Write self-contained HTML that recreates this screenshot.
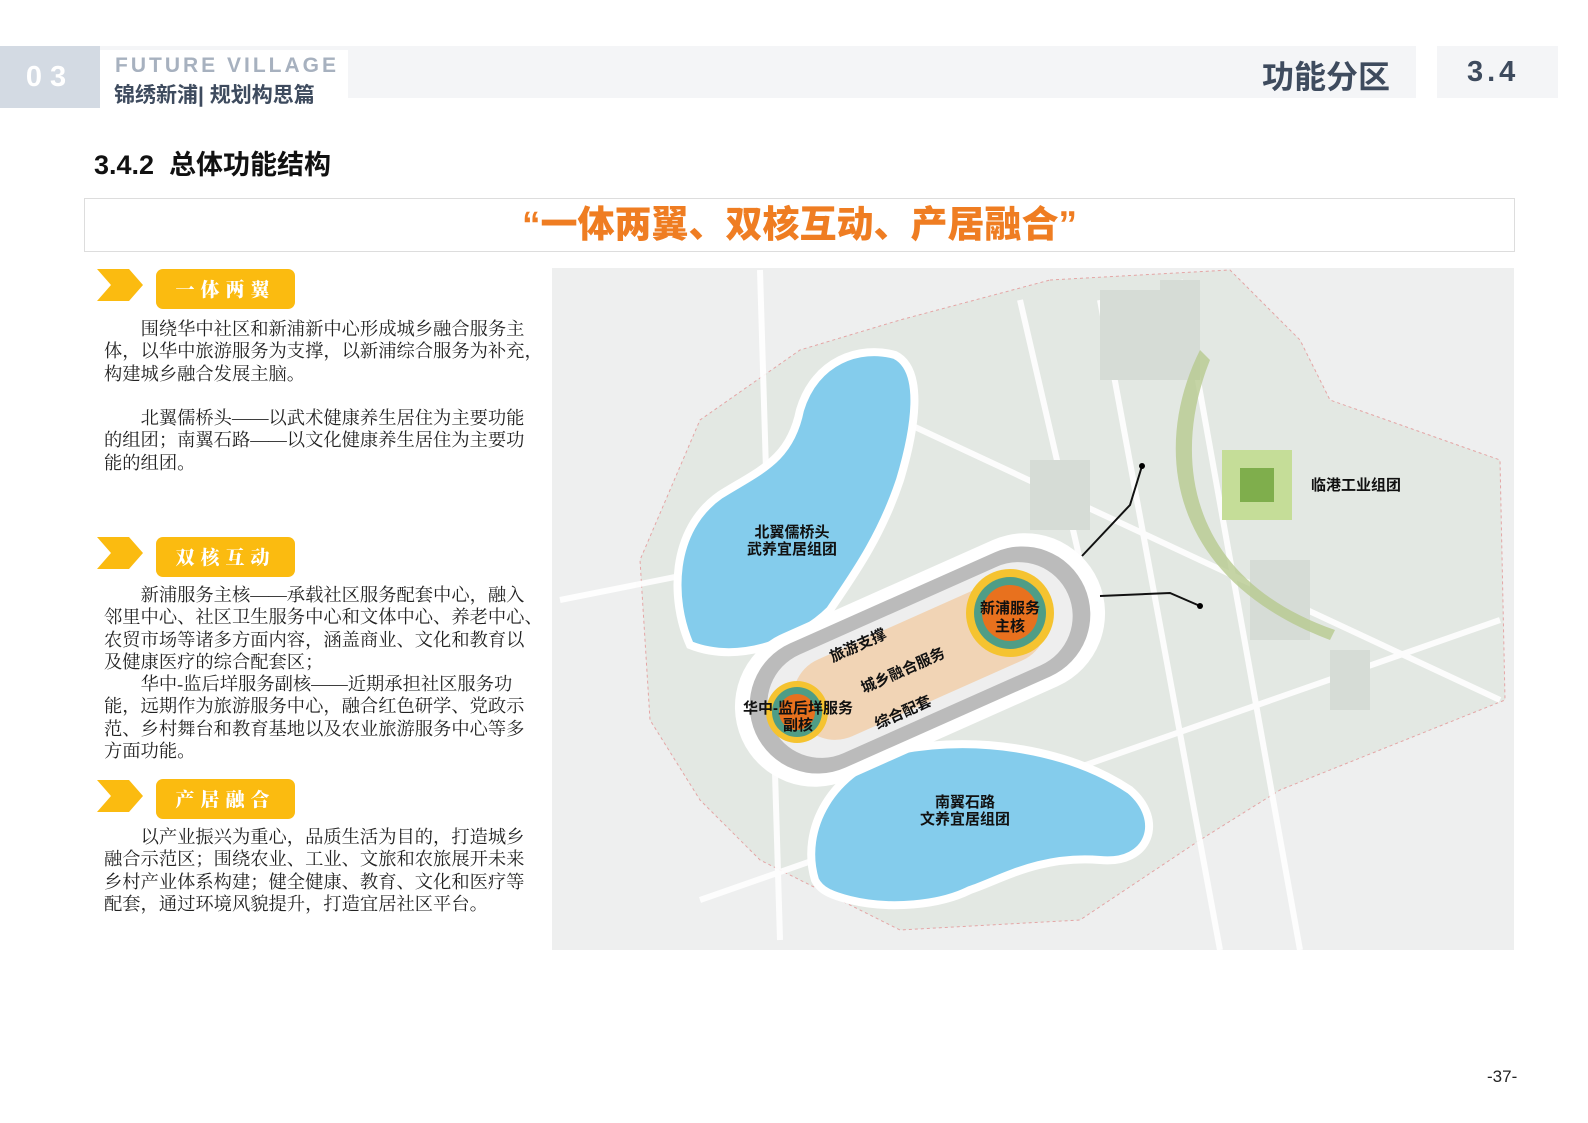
<!DOCTYPE html>
<html><head><meta charset="utf-8"><style>
*{margin:0;padding:0;box-sizing:border-box}
body{width:1588px;height:1123px;background:#fff;position:relative;overflow:hidden;font-family:"Liberation Sans","Noto Sans CJK SC",sans-serif}
.a{position:absolute}
.txt{position:absolute;left:104px;width:440px;font-family:"Liberation Serif","Noto Serif CJK SC",serif;font-size:18.3px;line-height:22.3px;color:#222;white-space:nowrap}
.tag{position:absolute;left:156px;width:139px;height:40px;background:#fbbb10;border-radius:7px;color:#fff;font-family:"Noto Serif CJK SC",serif;font-weight:900;font-size:19px;letter-spacing:6px;text-align:center;line-height:40px}
</style></head><body>
<div class="a" style="left:0;top:46px;width:1558px;height:52px;background:#f4f5f7"></div>
<div class="a" style="left:0;top:46px;width:100px;height:62px;background:#d3dae3;color:#fff;font-weight:bold;font-size:29px;letter-spacing:8px;line-height:62px;text-align:center">03</div>
<div class="a" style="left:100px;top:50px;width:248px;height:58px;background:#fff"></div>
<div class="a" style="left:115px;top:54px;font-weight:bold;font-size:21px;letter-spacing:3px;color:#a7b1bf">FUTURE VILLAGE</div>
<div class="a" style="left:114px;top:79px;font-weight:bold;font-size:21px;color:#3e4b5e">锦绣新浦| 规划构思篇</div>
<div class="a" style="left:1416px;top:44px;width:21px;height:56px;background:#fff"></div>
<div class="a" style="left:1262px;top:52px;font-weight:bold;font-size:32px;color:#3e4b5e">功能分区</div>
<div class="a" style="left:1467px;top:56px;font-weight:bold;font-size:29px;letter-spacing:4px;color:#3e4b5e">3.4</div>
<div class="a" style="left:94px;top:143px;font-weight:bold;font-size:27px;color:#111">3.4.2&nbsp; 总体功能结构</div>
<div class="a" style="left:84px;top:198px;width:1431px;height:54px;border:1px solid #ddd;text-align:center;color:#ef7d22;font-weight:900;font-size:37px;line-height:52px">“一体两翼、双核互动、产居融合”</div>

<svg class="a" style="left:97px;top:269px" width="48" height="32"><polygon points="0,0 32,0 46,16 32,32 0,32 14,16" fill="#fbbb10"/></svg>
<div class="tag" style="top:269px">一体两翼</div>
<div class="txt" style="top:318px">&emsp;&emsp;围绕华中社区和新浦新中心形成城乡融合服务主<br>体，以华中旅游服务为支撑，以新浦综合服务为补充，<br>构建城乡融合发展主脑。<br><br>&emsp;&emsp;北翼儒桥头——以武术健康养生居住为主要功能<br>的组团；南翼石路——以文化健康养生居住为主要功<br>能的组团。</div>

<svg class="a" style="left:97px;top:537px" width="48" height="32"><polygon points="0,0 32,0 46,16 32,32 0,32 14,16" fill="#fbbb10"/></svg>
<div class="tag" style="top:537px">双核互动</div>
<div class="txt" style="top:584px">&emsp;&emsp;新浦服务主核——承载社区服务配套中心，融入<br>邻里中心、社区卫生服务中心和文体中心、养老中心、<br>农贸市场等诸多方面内容，涵盖商业、文化和教育以<br>及健康医疗的综合配套区；<br>&emsp;&emsp;华中-监后垟服务副核——近期承担社区服务功<br>能，远期作为旅游服务中心，融合红色研学、党政示<br>范、乡村舞台和教育基地以及农业旅游服务中心等多<br>方面功能。</div>

<svg class="a" style="left:97px;top:780px" width="48" height="32"><polygon points="0,0 32,0 46,16 32,32 0,32 14,16" fill="#fbbb10"/></svg>
<div class="tag" style="top:779px">产居融合</div>
<div class="txt" style="top:826px">&emsp;&emsp;以产业振兴为重心，品质生活为目的，打造城乡<br>融合示范区；围绕农业、工业、文旅和农旅展开未来<br>乡村产业体系构建；健全健康、教育、文化和医疗等<br>配套，通过环境风貌提升，打造宜居社区平台。</div>

<svg class="a" style="left:552px;top:268px" width="962" height="682" viewBox="552 268 962 682">
<rect x="552" y="268" width="962" height="682" fill="#eeefef"/>
<path d="M1050 280 L1230 270 L1300 340 L1330 400 L1500 460 L1505 700 L1280 790 L1200 840 L1080 920 L900 930 L760 860 L700 800 L650 720 L640 560 L700 420 L800 350 L900 320 Z" fill="#e3e8e3" stroke="#e4a5a5" stroke-dasharray="3 3"/>
<g stroke="#fff" stroke-width="6" fill="none" opacity=".9">
<path d="M1100 300 L1220 950"/><path d="M1180 280 L1300 950"/><path d="M900 420 L1500 700"/><path d="M560 600 L760 560"/><path d="M700 900 L1500 620"/><path d="M760 270 L780 940"/><path d="M1020 300 L1080 560"/>
</g>
<g fill="#d6dcd6"><rect x="1100" y="290" width="60" height="90"/><rect x="1160" y="280" width="40" height="100"/><rect x="1030" y="460" width="60" height="70"/><rect x="1250" y="560" width="60" height="80"/><rect x="1330" y="650" width="40" height="60"/></g>
<path d="M1200 350 C1150 450 1170 580 1330 640 L1335 630 C1190 580 1170 460 1210 360 Z" fill="#b7c98f" opacity=".8"/>
<rect x="1222" y="450" width="70" height="70" fill="#c5dd98"/>
<rect x="1240" y="468" width="34" height="34" fill="#7fae4c"/>
<path d="M690 645 C670 600 670 530 720 495 C760 470 790 460 800 410 C815 360 860 345 895 355 C925 370 915 430 900 480 C880 540 850 580 830 610 C800 640 740 665 690 645 Z" fill="#84ccec" stroke="#fff" stroke-width="8"/>
<path d="M815 880 C800 830 830 770 900 750 C980 735 1070 750 1130 790 C1165 820 1150 865 1100 860 C1040 855 1000 880 970 890 C940 905 890 910 850 900 C830 895 820 890 815 880 Z" fill="#84ccec" stroke="#fff" stroke-width="8"/>
<g transform="rotate(-24 920 660)">
<rect x="725" y="580" width="390" height="160" rx="80" fill="#fff"/>
<rect x="740" y="592" width="360" height="136" rx="68" fill="#bbb"/>
<rect x="758" y="606" width="324" height="108" rx="54" fill="#eee"/>
<rect x="785" y="618" width="270" height="84" rx="42" fill="#f1d4b5"/>
</g>
<circle cx="1010" cy="613" r="44" fill="#f5c330"/><circle cx="1010" cy="613" r="36" fill="#4f9d86"/><circle cx="1010" cy="613" r="28" fill="#e8711e"/>
<circle cx="797" cy="712" r="31" fill="#f5c330"/><circle cx="797" cy="712" r="25" fill="#4f9d86"/><circle cx="797" cy="712" r="18" fill="#e8711e"/>
<path d="M1082 556 L1130 505 L1142 466" stroke="#111" stroke-width="2" fill="none"/><circle cx="1142" cy="466" r="3"/>
<path d="M1100 596 L1170 593 L1200 606" stroke="#111" stroke-width="2" fill="none"/><circle cx="1200" cy="606" r="3"/>
<g font-family="Liberation Sans,Noto Sans CJK SC,sans-serif" font-weight="bold" fill="#111" text-anchor="middle" font-size="15">
<text x="792" y="537">北翼儒桥头</text><text x="792" y="554">武养宜居组团</text>
<text x="965" y="807">南翼石路</text><text x="965" y="824">文养宜居组团</text>
<text x="1356" y="490">临港工业组团</text>
<text x="1010" y="613">新浦服务</text><text x="1010" y="631">主核</text>
<text x="798" y="713">华中-监后垟服务</text><text x="798" y="730">副核</text>
<text x="860" y="650" transform="rotate(-24 860 650)">旅游支撑</text>
<text x="905" y="675" transform="rotate(-24 905 675)">城乡融合服务</text>
<text x="905" y="717" transform="rotate(-24 905 717)">综合配套</text>
</g>
</svg>
<div class="a" style="left:1487px;top:1067px;font-size:17px;color:#222">-37-</div>
</body></html>
